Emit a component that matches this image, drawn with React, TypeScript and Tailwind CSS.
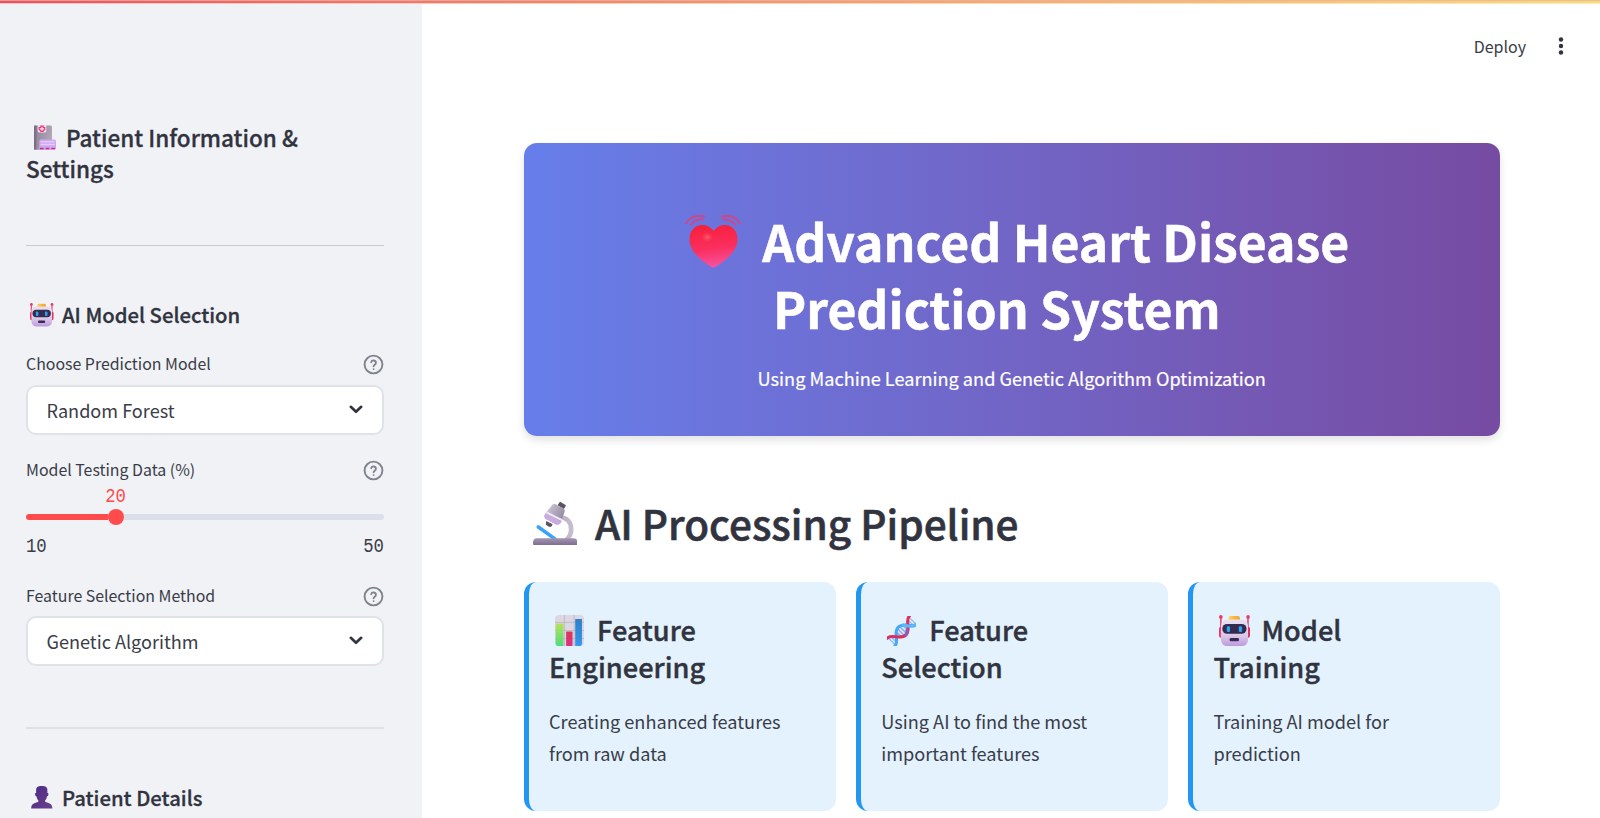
import React from "react";

type IconProps = { className?: string };

function FolderIcon({ className }: IconProps) {
  return (
    <svg viewBox="0 0 66 74" className={className} fill="none">
      <defs>
        <linearGradient id="folder" x1="0" y1="0" x2="1" y2="0.4">
          <stop stopColor="#8a7d93" />
          <stop offset="1" stopColor="#b3a8ba" />
        </linearGradient>
      </defs>
      <rect x="0" y="1" width="54" height="73" rx="4" fill="url(#folder)" />
      <rect x="0" y="1" width="7" height="73" rx="3" fill="#7c7086" />
      <path d="M11 0h26v17a5 5 0 0 1-5 5H16a5 5 0 0 1-5-5z" fill="#f3ecf9" />
      <path d="M20.500 3h7v4.500h5v7h-5v4.500h-7v-4.500h-5v-7h5z" stroke="#e9316f" strokeWidth="3.400" fill="#f3ecf9" />
      <rect x="16" y="43" width="50" height="31" rx="5" fill="#cfa9f0" />
      <rect x="20" y="48" width="42" height="4" fill="#e4ccfb" />
      <rect x="20" y="56" width="42" height="4" fill="#e4ccfb" />
      <path d="M18 70h11M35 70h11M52 70h11" stroke="#d22a8c" strokeWidth="5" />
    </svg>
  );
}

function RobotIcon({ className }: IconProps) {
  return (
    <svg viewBox="0 0 32 32" className={className}>
      <defs>
        <linearGradient id="robotHead" x1="0" y1="0" x2="0" y2="1">
          <stop stopColor="#e9e0f0" />
          <stop offset="0.6" stopColor="#d9cbe8" />
          <stop offset="1" stopColor="#bf98e0" />
        </linearGradient>
        <linearGradient id="robotTop" x1="0" y1="0" x2="1" y2="0">
          <stop stopColor="#ffd05a" />
          <stop offset="1" stopColor="#f09f2e" />
        </linearGradient>
      </defs>
      <rect x="10" y="1" width="11.500" height="6" rx="1.800" fill="url(#robotTop)" />
      <rect x="1" y="2" width="1.800" height="12" fill="#e2557c" />
      <rect x="29" y="2" width="1.800" height="12" fill="#e2557c" />
      <circle cx="1.900" cy="2" r="1.900" fill="#ef3a68" />
      <circle cx="30" cy="2" r="1.900" fill="#ef3a68" />
      <rect x="0" y="12" width="5" height="11.500" rx="2" fill="#f0386a" />
      <rect x="27" y="12" width="5" height="11.500" rx="2" fill="#e02d62" />
      <rect x="2" y="4.600" width="28" height="27.400" rx="6.500" fill="url(#robotHead)" />
      <rect x="3.400" y="9.200" width="25" height="10.200" rx="5" fill="#352a50" />
      <rect x="8" y="11.600" width="3.400" height="6" rx="1.200" fill="#2ba4ec" />
      <rect x="20.400" y="11.600" width="3.400" height="6" rx="1.200" fill="#2ba4ec" />
      <rect x="11" y="23.800" width="9.600" height="3.400" rx="1.200" fill="#3a2b52" />
    </svg>
  );
}

function PersonIcon({ className }: IconProps) {
  return (
    <svg viewBox="0 0 64 68" className={className}>
      <defs>
        <linearGradient id="person" x1="0" y1="0" x2="1" y2="1">
          <stop stopColor="#4b2a83" />
          <stop offset="1" stopColor="#6a4090" />
        </linearGradient>
      </defs>
      <path
        fill="url(#person)"
        d="M32 0c12 0 17 4 17 12v9c3 0 4 2 3 6-1 3-2 4-4 4-1 6-3 10-6 13v3c4 3 9 4 14 6 5 3 8 7 8 15H0c0-8 3-12 8-15 5-2 10-3 14-6v-3c-3-3-5-7-6-13-2 0-3-1-4-4-1-4 0-6 3-6v-9C15 4 20 0 32 0z"
      />
    </svg>
  );
}

function HeartIcon({ className }: IconProps) {
  return (
    <svg viewBox="0 0 166 158" className={className} fill="none">
      <defs>
        <linearGradient id="heart" x1="0.4" y1="0" x2="0.55" y2="1">
          <stop stopColor="#f6203c" />
          <stop offset="0.55" stopColor="#fb2f5f" />
          <stop offset="1" stopColor="#f655a5" />
        </linearGradient>
        <radialGradient id="heartShine">
          <stop stopColor="#ff8a8a" />
          <stop offset="1" stopColor="#ff6a70" stopOpacity="0" />
        </radialGradient>
      </defs>
      <path
        d="M84 158C66 148 13 116 13 72c0-25 16-42 38-42 15 0 27 8 34 18 7-10 18-18 33-18 22 0 38 17 38 42 0 44-54 76-72 86z"
        fill="url(#heart)"
      />
      <ellipse cx="66" cy="66" rx="17" ry="15" fill="url(#heartShine)" opacity="0.5" />
      <path
        d="M3 25C12 8 32 0 57 4M17 29c8-11 20-17 36-16M163 25c-9-17-29-25-54-21M149 29c-8-11-20-17-36-16"
        stroke="#d8437f"
        strokeWidth="5.500"
        strokeLinecap="round"
      />
    </svg>
  );
}

function MicroscopeIcon({ className }: IconProps) {
  return (
    <svg viewBox="14 18 134 132" className={className} fill="none">
      <defs>
        <linearGradient id="tube" x1="0" y1="0" x2="1" y2="0.6">
          <stop stopColor="#d9d2e0" />
          <stop offset="1" stopColor="#93879f" />
        </linearGradient>
        <linearGradient id="arm" x1="0" y1="0" x2="1" y2="0">
          <stop stopColor="#b6a9c4" />
          <stop offset="1" stopColor="#c6bdcf" />
        </linearGradient>
        <linearGradient id="base" x1="0" y1="0" x2="0" y2="1">
          <stop stopColor="#a297ae" />
          <stop offset="1" stopColor="#816a94" />
        </linearGradient>
      </defs>
      <path d="M92 66c25 0 37 15 37 36 0 14-6 24-14 32" stroke="url(#arm)" strokeWidth="14" />
      <path d="M30 95l50 36" stroke="#3ba3f6" strokeWidth="11" strokeLinecap="round" />
      <path d="M14 142c0-8 4-13 12-13h110c8 0 12 5 12 13v4a4 4 0 0 1-4 4H18a4 4 0 0 1-4-4z" fill="url(#base)" />
      <path d="M97 20l14 8c2 1 2 3 1 5l-5 8-19-11 5-8c1-2 3-3 4-2z" fill="#5c5363" />
      <path d="M54 77l19 10-3 6c-2 3-6 3-9 1l-5-3c-3-2-4-5-3-8z" fill="#5c5363" />
      <path d="M82 27l23 12c4 2 5 6 4 10l-10 30c-2 7-11 11-18 7L53 71c-6-3-6-10-3-15l21-26c3-4 7-5 11-3z" fill="url(#tube)" />
      <path d="M52 54l48 25c-3 8-12 11-19 7L53 71c-6-4-6-10-1-17z" fill="#c9abdf" />
      <path d="M57 49l46 23-2 6-48-24z" fill="#f0e8f7" />
    </svg>
  );
}

function ChartIcon({ className }: IconProps) {
  return (
    <svg viewBox="0 0 86 92" className={className}>
      <defs>
        <linearGradient id="barGreen" x1="0" y1="0" x2="0" y2="1">
          <stop stopColor="#b8e05a" />
          <stop offset="1" stopColor="#4fdc7c" />
        </linearGradient>
        <linearGradient id="barPink" x1="0" y1="0" x2="0" y2="1">
          <stop stopColor="#d83a55" />
          <stop offset="1" stopColor="#e02f86" />
        </linearGradient>
        <linearGradient id="barBlue" x1="0" y1="0" x2="0" y2="1">
          <stop stopColor="#2f80c8" />
          <stop offset="1" stopColor="#3497ee" />
        </linearGradient>
      </defs>
      <rect width="86" height="92" rx="11" fill="#dcd7e2" />
      <path d="M28 0v92M57 0v92M0 22h86M0 46h86M0 70h86" stroke="#bcb5c5" strokeWidth="2.500" />
      <path d="M2 25h23v67H9a7 7 0 0 1-7-7z" fill="url(#barGreen)" />
      <rect x="33" y="49" width="19" height="43" rx="2" fill="url(#barPink)" />
      <path d="M60 12h20v73a7 7 0 0 1-5 7H60z" fill="url(#barBlue)" />
    </svg>
  );
}

function DnaIcon({ className }: IconProps) {
  return (
    <svg viewBox="0 0 84 88" className={className} fill="none">
      <g transform="translate(12 76) rotate(-45)">
        <ellipse cx="45" cy="0" rx="19" ry="15" fill="#8fb4f0" />
        <path d="M2 -14V14M10 -11V11M80 -11V11M88 -14V14" stroke="#9cc0f0" strokeWidth="4.500" />
        <path d="M36 -12V12M45 -14V14M54 -12V12" stroke="#e6eefb" strokeWidth="4" />
        <path d="M-1 16C18 17 22 -16 45 -16S72 17 91 16" stroke="#4aa8f9" strokeWidth="9" strokeLinecap="round" />
        <path d="M-1 -16C18 -17 22 16 45 16S72 -17 91 -16" stroke="#dc2f60" strokeWidth="9" strokeLinecap="round" />
        <path d="M60 -10C70 2 74 17 91 16" stroke="#5cb8fa" strokeWidth="9" strokeLinecap="round" />
        <path d="M42 16c9 0 13-4 17-10" stroke="#8a5fc0" strokeWidth="9" />
      </g>
    </svg>
  );
}

function HelpIcon() {
  return (
    <svg viewBox="0 0 24 24" className="-mr-px size-[23px]" fill="none" stroke="#7f838e" strokeWidth="2" strokeLinecap="round" strokeLinejoin="round">
      <circle cx="12" cy="12" r="9.300" />
      <path d="M9.600 9.600a2.500 2.500 0 0 1 4.900.8c0 1.600-2.400 2-2.400 3.400M12.100 16.800h.01" strokeWidth="1.900" />
    </svg>
  );
}

function FieldLabel({ children }: { children: React.ReactNode }) {
  return (
    <div className="flex h-6 items-center justify-between text-[15.900px] leading-6 text-[#3a3c48]">
      <span>{children}</span>
      <HelpIcon />
    </div>
  );
}

function SelectBox({ value }: { value: string }) {
  return (
    <div className="flex h-[50px] items-center justify-between rounded-[10px] border-2 border-[#dfe2e8] bg-white pr-[19px] pl-[18.500px]">
      <span className="pt-px text-[18.100px] leading-[28px] text-[#3a3c48]">{value}</span>
      <svg viewBox="0 0 14 9" className="h-[9px] w-[14px]" fill="none" stroke="#31333f" strokeWidth="2.600" strokeLinecap="round" strokeLinejoin="round">
        <path d="M1.800 1.800L7 6.800l5.200-5" />
      </svg>
    </div>
  );
}

function StepCard({ icon, first, second, body }: { icon: React.ReactNode; first: string; second: string; body: [string, string] }) {
  return (
    <div className="h-[229px] w-[312px] rounded-[12px] border-l-[5px] border-[#2196f3] bg-[#e3f2fd] pt-[29px] pl-[20.500px]">
      <h3 className="text-[27.200px] leading-[37px] font-medium [-webkit-text-stroke:0.4px]">
        <div className="flex items-center">
          <span className="mt-[2px] flex w-[48px] pl-[5.500px]">{icon}</span>
          <span>{first}</span>
        </div>
        <div>{second}</div>
      </h3>
      <p className="mt-[20px] text-[18.150px] leading-[32px] text-[#3a3c48]">
        {body[0]}
        <br />
        {body[1]}
      </p>
    </div>
  );
}

export default function App() {
  return (
    <div className="flex h-[818px] w-[1600px] flex-col overflow-hidden bg-white font-['Noto_Sans_CJK_SC',sans-serif] text-[#31333f]">
      <div className="h-px shrink-0 bg-linear-to-r from-[#f2949a] to-[#edbf8c]" />
      <div className="h-[2px] shrink-0 bg-linear-to-r from-[#e3565f] to-[#f8d88c]" />
      <div className="h-px shrink-0 bg-linear-to-r from-[#f5bfc3] to-[#ffef9c]" />
      <div className="flex min-h-0 flex-1">
        <aside className="w-[422px] shrink-0 bg-[#f0f2f6] pt-[118px] pr-[38px] pl-[26px]">
          <h2 className="text-[22.500px] leading-[30.500px] font-medium [-webkit-text-stroke:0.3px]">
            <div className="flex items-center">
              <span className="flex w-[40px] pl-[8px]">
                <FolderIcon className="h-[25px] w-[22px]" />
              </span>
              <span>Patient Information &amp;</span>
            </div>
            <div>Settings</div>
          </h2>
          <div className="mt-[62px] h-px bg-[#c9cbd2]" />
          <h3 className="mt-[54px] flex h-7 items-center text-[20.300px] leading-7 font-medium [-webkit-text-stroke:0.3px]">
            <span className="mt-[2px] flex w-[36px] pl-[4px]">
              <RobotIcon className="size-[23.500px]" />
            </span>
            <span>AI Model Selection</span>
          </h3>

          <div className="mt-[24px]">
            <FieldLabel>Choose Prediction Model</FieldLabel>
            <div className="mt-[8.500px]">
              <SelectBox value="Random Forest" />
            </div>
          </div>

          <div className="mt-[23.500px]">
            <FieldLabel>Model Testing Data (%)</FieldLabel>
            <div className="font-['Liberation_Mono',monospace] text-[17.300px] leading-5 text-[#3a3c48]">
              <div className="mt-[6px] flex w-[179px] justify-center text-[#ff4b4b]">
                <span className="scale-y-[1.120]">20</span>
              </div>
              <div className="mt-px flex h-4 items-center">
                <div className="h-[6px] w-[82px] rounded-l-full bg-[#ff4b4b]" />
                <div className="size-[15.500px] rounded-full bg-[#ff4b4b]" />
                <div className="h-[6px] flex-1 rounded-r-full bg-[#dbdfe9]" />
              </div>
              <div className="mt-[13px] flex justify-between">
                <span className="scale-y-[1.120]">10</span>
                <span className="scale-y-[1.120]">50</span>
              </div>
            </div>
          </div>

          <div className="mt-[26px]">
            <FieldLabel>Feature Selection Method</FieldLabel>
            <div className="mt-[7.500px]">
              <SelectBox value="Genetic Algorithm" />
            </div>
          </div>

          <div className="mt-[61.500px] h-[2px] bg-[#dfe1e7]" />
          <h3 className="mt-[54px] flex h-7 items-center text-[20.300px] leading-7 font-medium [-webkit-text-stroke:0.3px]">
            <span className="mt-px flex w-[36px] pl-[5px]">
              <PersonIcon className="h-[22.500px] w-[21.500px]" />
            </span>
            <span>Patient Details</span>
          </h3>
        </aside>

        <main className="flex min-w-0 flex-1 flex-col">
          <header className="flex h-[84px] shrink-0 items-center justify-end pr-[36px] text-[16px] text-[#3a3c48]">
            <span className="-mt-px">Deploy</span>
            <svg viewBox="0 0 6 18" className="ml-[32px] h-[18px] w-[6px]" fill="#31333f">
              <circle cx="3" cy="2.500" r="2.200" />
              <circle cx="3" cy="9" r="2.200" />
              <circle cx="3" cy="15.500" r="2.200" />
            </svg>
          </header>

          <div className="mt-[55px] ml-[101.500px] w-[976.500px] shrink-0">
            <section className="h-[293px] rounded-[13px] bg-linear-to-r from-[#667eea] to-[#764ba2] pt-[64px] text-center text-white shadow-[0_4px_8px_rgba(0,0,0,0.12)]">
              <h1 className="text-[49.900px] leading-[66.700px] font-bold [-webkit-text-stroke:0.5px]">
                <div className="flex items-center justify-center pl-[11px]">
                  <HeartIcon className="mt-[2px] mr-[21px] h-[53px] w-[56px]" />
                  <span>Advanced Heart Disease</span>
                </div>
                <div className="pr-[30px]">Prediction System</div>
              </h1>
              <p className="mt-[22.500px] text-[18.150px] leading-[30px] [-webkit-text-stroke:0.2px]">Using Machine Learning and Genetic Algorithm Optimization</p>
            </section>

            <h2 className="mt-[57px] flex h-[60px] items-center text-[40.500px] leading-[60px] font-medium [-webkit-text-stroke:0.6px]">
              <span className="flex w-[71.500px] pl-[9px]">
                <MicroscopeIcon className="size-[44.500px]" />
              </span>
              <span>AI Processing Pipeline</span>
            </h2>

            <div className="mt-[29px] flex justify-between">
              <StepCard icon={<ChartIcon className="h-[31px] w-[29px]" />} first="Feature" second="Engineering" body={["Creating enhanced features", "from raw data"]} />
              <StepCard icon={<DnaIcon className="h-[30px] w-[29px]" />} first="Feature" second="Selection" body={["Using AI to find the most", "important features"]} />
              <StepCard icon={<RobotIcon className="size-[31px]" />} first="Model" second="Training" body={["Training AI model for", "prediction"]} />
            </div>
          </div>
        </main>
      </div>
    </div>
  );
}
